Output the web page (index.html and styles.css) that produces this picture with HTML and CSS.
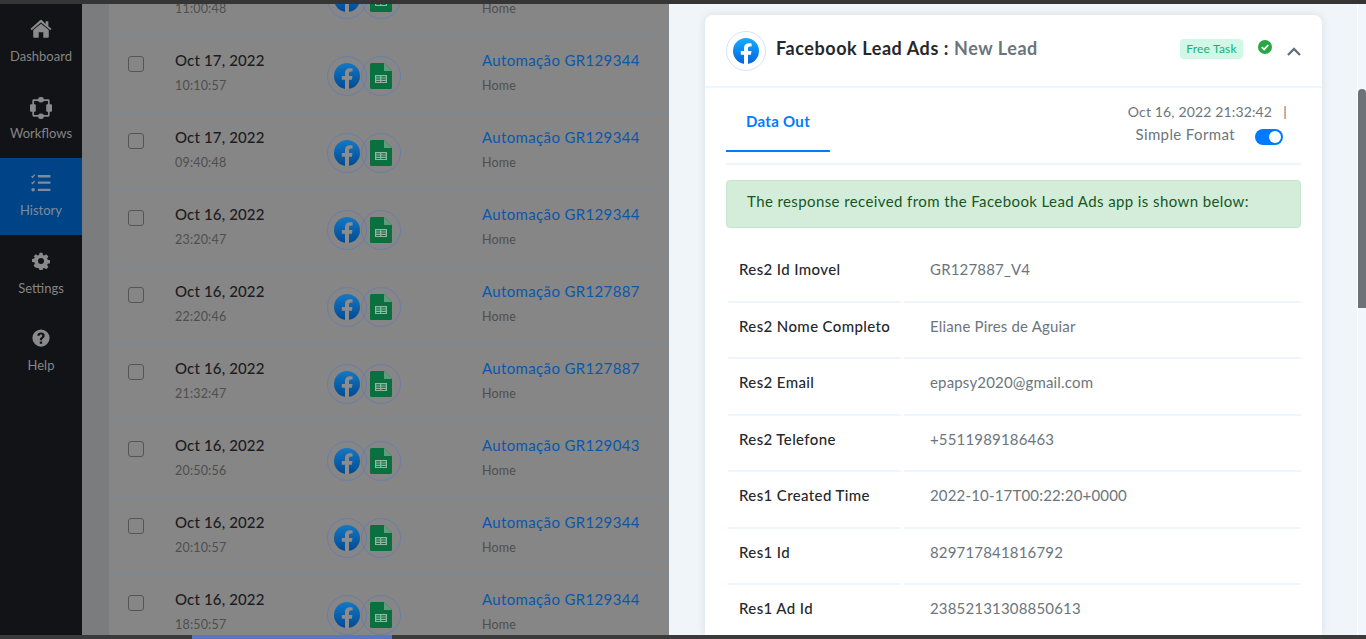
FILE: index.html
```html
<!DOCTYPE html>
<html lang="en">
<head>
  <meta charset="UTF-8" />
  <title>Task History</title>
  <link rel="stylesheet" href="styles.css">
</head>
<body>
  <svg class="defs" width="0" height="0">
    <defs>
      <linearGradient id="fbDim" x1="0" y1="0" x2="0" y2="1"><stop offset="0" stop-color="#1478c4"/><stop offset="1" stop-color="#004a94"/></linearGradient>
      <linearGradient id="fbLit" x1="0" y1="0" x2="0" y2="1"><stop offset="0" stop-color="#18acfe"/><stop offset="1" stop-color="#0163e0"/></linearGradient>
      <symbol id="fb-dim" viewBox="0 0 26 26">
        <circle cx="13" cy="13" r="13" fill="url(#fbDim)"/>
        <path d="M11 26v-9.2H7.8V13H11v-2.9c0-3.2 1.9-4.9 4.8-4.9 1.4 0 2.8.2 2.8.2v3.1H17c-1.5 0-2 1-2 1.9V13h3.5l-.6 3.8H15V26z" fill="#8c8c8c"/>
      </symbol>
      <symbol id="fb-lit" viewBox="0 0 26 26">
        <circle cx="13" cy="13" r="13" fill="url(#fbLit)"/>
        <path d="M11 26v-9.2H7.8V13H11v-2.9c0-3.2 1.9-4.9 4.8-4.9 1.4 0 2.8.2 2.8.2v3.1H17c-1.5 0-2 1-2 1.9V13h3.5l-.6 3.8H15V26z" fill="#fff"/>
      </symbol>
      <symbol id="sheets" viewBox="0 0 22 26">
        <path d="M1.5 0H14l8 8v16.500a1.500 1.500 0 0 1-1.500 1.500h-19A1.500 1.500 0 0 1 0 24.500v-23A1.500 1.500 0 0 1 1.500 0z" fill="#0b7040"/>
        <path d="M14 0l8 8h-8z" fill="#5f9c7e"/>
        <path d="M5 12h12v8H5zm1.200 1.200v1.200h3.900v-1.200zm5.100 0v1.200h4.500v-1.200zm-5.100 2.400v1.200h3.900v-1.200zm5.100 0v1.200h4.500v-1.200zm-5.100 2.400v.9h3.900V18zm5.100 0v.9h4.500V18z" fill="#8fb7a2" fill-rule="evenodd"/>
      </symbol>
    </defs>
  </svg>

  <div class="topbar"></div>
  <div class="app">
    <nav class="sidebar">
      <a class="nav-item">
        <svg class="nav-icon" viewBox="0 0 24 22"><path d="M12 4.600 3.500 11.500V19a1 1 0 0 0 1 1h5v-6h5v6h5a1 1 0 0 0 1-1v-7.500z"/><path d="M23.400 10.200 20 7.400V2h-3v3L12.800.700a1.300 1.300 0 0 0-1.600 0L.6 10.200l1.200 1.500L12 3.300l10.200 8.400z"/></svg>
        <span>Dashboard</span>
      </a>
      <a class="nav-item">
        <svg class="nav-icon flow" viewBox="0 0 22 22"><rect x="3.200" y="3.200" width="15.600" height="15.600" rx=".6" fill="none" stroke="#8a8a8a" stroke-width="1.700"/><rect x="8.200" y="0" width="5.600" height="5.500" rx="2.200"/><rect x="8.200" y="16.500" width="5.600" height="5.500" rx="2.200"/><rect x="0" y="7.200" width="5.800" height="7.600" rx="1"/><rect x="16.200" y="7.200" width="5.800" height="7.600" rx="1"/></svg>
        <span>Workflows</span>
      </a>
      <a class="nav-item active">
        <svg class="nav-icon" viewBox="0 0 20 20"><path d="M1 3l1 1 2-2.500M1 9l1 1 2-2.500" fill="none" stroke="#7f8b99" stroke-width="1.300"/><circle cx="2.500" cy="16" r="1.700"/><path d="M7 2h12v2.200H7zM7 8h12v2.200H7zM7 15h12v2.200H7z"/></svg>
        <span>History</span>
      </a>
      <a class="nav-item">
        <svg class="nav-icon small" viewBox="0 0 24 24"><path fill-rule="evenodd" d="M10 1h4l.6 3 1.800.8 2.600-1.700 2.900 2.900-1.700 2.600.8 1.800 3 .6v4l-3 .6-.8 1.800 1.700 2.600-2.900 2.900-2.600-1.700-1.800.8-.6 3h-4l-.6-3-1.800-.8L5 21.100l-2.900-2.900 1.700-2.600-.8-1.800-3-.6v-4l3-.6.8-1.800L2.100 6 5 3.100l2.600 1.700L9.400 4zM12 8a4 4 0 1 0 0 8 4 4 0 0 0 0-8z"/></svg>
        <span>Settings</span>
      </a>
      <a class="nav-item">
        <svg class="nav-icon small" viewBox="0 0 24 24"><path fill-rule="evenodd" d="M12 .5a11.500 11.500 0 1 1 0 23 11.500 11.500 0 0 1 0-23zM10.400 16.500v3.200h3.200v-3.200zM12 4.800c-2.900 0-4.700 1.500-5 4l2.900.5c.2-1.200.9-1.900 2-1.900 1.100 0 1.900.6 1.900 1.600 0 .8-.5 1.300-1.400 1.900-1.400.9-2 1.800-2 3.200v.8h3v-.5c0-.8.3-1.100 1.300-1.800 1.300-.9 2.200-2 2.200-3.800 0-2.500-2-4-4.900-4z"/></svg>
        <span>Help</span>
      </a>
    </nav>

    <div class="gutter"></div>

    <section class="history">
      <div class="row partial">
        <span class="check"></span>
        <div class="when"><b>Oct 17, 2022</b><small>11:00:48</small></div>
        <div class="apps"><span class="app-ring"><svg class="fb"><use href="#fb-dim"/></svg></span><span class="app-ring second"><svg class="gs"><use href="#sheets"/></svg></span></div>
        <div class="name"><a>Automação GR129344</a><small>Home</small></div>
      </div>
      <div class="row">
        <span class="check"></span>
        <div class="when"><b>Oct 17, 2022</b><small>10:10:57</small></div>
        <div class="apps"><span class="app-ring"><svg class="fb"><use href="#fb-dim"/></svg></span><span class="app-ring second"><svg class="gs"><use href="#sheets"/></svg></span></div>
        <div class="name"><a>Automação GR129344</a><small>Home</small></div>
      </div>
      <div class="row">
        <span class="check"></span>
        <div class="when"><b>Oct 17, 2022</b><small>09:40:48</small></div>
        <div class="apps"><span class="app-ring"><svg class="fb"><use href="#fb-dim"/></svg></span><span class="app-ring second"><svg class="gs"><use href="#sheets"/></svg></span></div>
        <div class="name"><a>Automação GR129344</a><small>Home</small></div>
      </div>
      <div class="row">
        <span class="check"></span>
        <div class="when"><b>Oct 16, 2022</b><small>23:20:47</small></div>
        <div class="apps"><span class="app-ring"><svg class="fb"><use href="#fb-dim"/></svg></span><span class="app-ring second"><svg class="gs"><use href="#sheets"/></svg></span></div>
        <div class="name"><a>Automação GR129344</a><small>Home</small></div>
      </div>
      <div class="row">
        <span class="check"></span>
        <div class="when"><b>Oct 16, 2022</b><small>22:20:46</small></div>
        <div class="apps"><span class="app-ring"><svg class="fb"><use href="#fb-dim"/></svg></span><span class="app-ring second"><svg class="gs"><use href="#sheets"/></svg></span></div>
        <div class="name"><a>Automação GR127887</a><small>Home</small></div>
      </div>
      <div class="row">
        <span class="check"></span>
        <div class="when"><b>Oct 16, 2022</b><small>21:32:47</small></div>
        <div class="apps"><span class="app-ring"><svg class="fb"><use href="#fb-dim"/></svg></span><span class="app-ring second"><svg class="gs"><use href="#sheets"/></svg></span></div>
        <div class="name"><a>Automação GR127887</a><small>Home</small></div>
      </div>
      <div class="row">
        <span class="check"></span>
        <div class="when"><b>Oct 16, 2022</b><small>20:50:56</small></div>
        <div class="apps"><span class="app-ring"><svg class="fb"><use href="#fb-dim"/></svg></span><span class="app-ring second"><svg class="gs"><use href="#sheets"/></svg></span></div>
        <div class="name"><a>Automação GR129043</a><small>Home</small></div>
      </div>
      <div class="row">
        <span class="check"></span>
        <div class="when"><b>Oct 16, 2022</b><small>20:10:57</small></div>
        <div class="apps"><span class="app-ring"><svg class="fb"><use href="#fb-dim"/></svg></span><span class="app-ring second"><svg class="gs"><use href="#sheets"/></svg></span></div>
        <div class="name"><a>Automação GR129344</a><small>Home</small></div>
      </div>
      <div class="row">
        <span class="check"></span>
        <div class="when"><b>Oct 16, 2022</b><small>18:50:57</small></div>
        <div class="apps"><span class="app-ring"><svg class="fb"><use href="#fb-dim"/></svg></span><span class="app-ring second"><svg class="gs"><use href="#sheets"/></svg></span></div>
        <div class="name"><a>Automação GR129344</a><small>Home</small></div>
      </div>
    </section>

    <aside class="drawer">
      <div class="card">
        <header class="card-head">
          <span class="app-ring lit"><svg class="fb"><use href="#fb-lit"/></svg></span>
          <h2>Facebook Lead Ads : <em>New Lead</em></h2>
          <span class="badge">Free Task</span>
          <svg class="ok" viewBox="0 0 14 14"><circle cx="7" cy="7" r="7" fill="#28a745"/><path d="M3.800 7.200l2.300 2.200 4.200-4.400" fill="none" stroke="#fff" stroke-width="1.800"/></svg>
          <svg class="chevron" viewBox="0 0 14 9"><path d="M1 8l6-6 6 6" fill="none" stroke="#67707c" stroke-width="2.400"/></svg>
        </header>
        <div class="card-body">
          <div class="tabs">
            <a class="tab">Data Out</a>
            <div class="tab-meta">
              <div class="stamp">Oct 16, 2022 21:32:42 &nbsp;&nbsp;|</div>
              <div class="format">Simple Format <span class="switch"></span></div>
            </div>
          </div>
          <div class="alert">The response received from the Facebook Lead Ads app is shown below:</div>
          <div class="data">
            <div class="data-row"><span class="key">Res2 Id Imovel</span><span class="val">GR127887_V4</span></div>
            <div class="data-row"><span class="key">Res2 Nome Completo</span><span class="val">Eliane Pires de Aguiar</span></div>
            <div class="data-row"><span class="key">Res2 Email</span><span class="val">epapsy2020@gmail.com</span></div>
            <div class="data-row"><span class="key">Res2 Telefone</span><span class="val">+5511989186463</span></div>
            <div class="data-row"><span class="key">Res1 Created Time</span><span class="val">2022-10-17T00:22:20+0000</span></div>
            <div class="data-row"><span class="key">Res1 Id</span><span class="val">829717841816792</span></div>
            <div class="data-row"><span class="key">Res1 Ad Id</span><span class="val">23852131308850613</span></div>
          </div>
        </div>
      </div>
      <div class="scrollbar"><div class="thumb"></div></div>
    </aside>
  </div>
  <div class="bottombar"><div class="tab-strip"></div></div>
</body>
</html>
```

FILE: styles.css
```css
html, body {
  margin: 0;
  height: 100%;
  overflow: hidden;
}
body {
  display: flex;
  flex-direction: column;
  font-family: 'Lato', 'Open Sans', sans-serif;
  background: #333;
}
.defs {
  position: absolute;
}
.topbar {
  height: 4px;
  background: #353535;
  flex: none;
}
.bottombar {
  height: 4px;
  background: #3a3a3a;
  flex: none;
}
.tab-strip {
  width: 200px;
  height: 4px;
  margin-left: 192px;
  background: #5b74c4;
}
.app {
  flex: 1;
  display: flex;
  min-height: 0;
}

/* sidebar */
.sidebar {
  width: 82px;
  flex: none;
  background: #111316;
  color: #858585;
  font-size: 13px;
}
.nav-item {
  height: 77px;
  display: flex;
  flex-direction: column;
  align-items: center;
  padding-top: 15px;
  box-sizing: border-box;
}
.nav-item span {
  margin-top: 7.500px;
}
.nav-item.active {
  background: #004488;
  color: #7f8b99;
}
.nav-icon {
  width: 22px;
  height: 21px;
  fill: #8a8a8a;
}
.nav-icon.flow {
  height: 22px;
  margin: 1px 0 -2px;
}
.nav-icon.small {
  width: 18px;
  height: 18px;
  margin: 2px 0 2px;
}
.active .nav-icon {
  fill: #7f8b99;
}

/* list behind the drawer */
.gutter {
  width: 27px;
  flex: none;
  background: #7b7c7d;
}
.history {
  width: 560px;
  flex: none;
  background: #868686;
  overflow: hidden;
}
.row {
  height: 77px;
  box-sizing: border-box;
  border-bottom: 2px solid #80878f;
  display: flex;
  align-items: flex-start;
  position: relative;
}
.row.partial {
  margin-top: -44px;
}
.check {
  width: 14px;
  height: 14px;
  margin: 19px 0 0 19px;
  border: 1px solid #555;
  border-radius: 3px;
  flex: none;
}
.when {
  margin: 13px 0 0 31px;
  width: 152px;
  flex: none;
}
.when b {
  display: block;
  font-weight: 500;
  font-size: 15px;
  line-height: 20px;
  color: #1c1c1e;
  letter-spacing: .15px;
}
small {
  display: block;
  font-size: 12.500px;
  line-height: 18px;
  margin-top: 7px;
  color: #4e4e4e;
  letter-spacing: .2px;
}
.apps {
  display: flex;
  margin-top: 19px;
  width: 155px;
  flex: none;
}
.app-ring {
  width: 38px;
  height: 38px;
  border: 1px solid #6c7ca8;
  border-radius: 50%;
  display: flex;
  align-items: center;
  justify-content: center;
  flex: none;
}
.app-ring.second {
  margin-left: -6px;
}
.fb {
  width: 26px;
  height: 26px;
}
.gs {
  width: 22px;
  height: 26px;
}
.name {
  margin-top: 13px;
}
.name a {
  display: block;
  font-size: 15px;
  line-height: 20px;
  color: #0a57ab;
  letter-spacing: .35px;
}

/* drawer */
.drawer {
  flex: 1;
  background: #f0f5fa;
  display: flex;
  min-width: 0;
}
.card {
  width: 617px;
  margin: 11px 0 0 36px;
  background: #fff;
  border-radius: 8px 8px 0 0;
  box-shadow: 0 0 8px rgba(0, 0, 0, .1);
  flex: none;
}
.card-head {
  height: 73px;
  box-sizing: border-box;
  border-bottom: 2px solid #eef5fd;
  padding: 0 21px;
  display: flex;
  align-items: center;
}
.app-ring.lit {
  border-color: #d5e3f8;
}
.card-head h2 {
  margin: -6px 0 0 10px;
  font-size: 18px;
  font-weight: 700;
  color: #25272b;
  letter-spacing: .57px;
  flex: 1;
}
.card-head em {
  font-style: normal;
  color: #6c757d;
}
.badge {
  height: 20px;
  line-height: 20px;
  width: 63px;
  text-align: center;
  margin-top: -3px;
  border-radius: 4px;
  background: #d1f7e6;
  color: #16b077;
  font-size: 12px;
  letter-spacing: .2px;
}
.ok {
  width: 14px;
  height: 14px;
  margin: -7px 0 0 15px;
}
.chevron {
  width: 14px;
  height: 9px;
  margin: 2px 0 0 15px;
}
.card-body {
  padding: 0 21px;
}
.tabs {
  height: 77px;
  box-sizing: border-box;
  border-bottom: 2px solid #eef5fd;
  display: flex;
  justify-content: space-between;
}
.tab {
  width: 104px;
  height: 64px;
  box-sizing: border-box;
  border-bottom: 2px solid #007bff;
  text-align: center;
  line-height: 67px;
  color: #007bff;
  font-weight: 700;
  font-size: 15px;
  letter-spacing: .3px;
}
.tab-meta {
  margin: 14px 14px 0 0;
  text-align: right;
  color: #6c757d;
  font-size: 14px;
  letter-spacing: .15px;
}
.stamp {
  line-height: 20px;
}
.format {
  display: flex;
  align-items: center;
  justify-content: flex-end;
  line-height: 20px;
  margin-top: 0;
  font-size: 15px;
  letter-spacing: .38px;
}
.switch {
  width: 28px;
  height: 16px;
  margin: 7px 4px 0 20px;
  border-radius: 8px;
  background: #007bff;
  position: relative;
}
.switch::after {
  content: "";
  position: absolute;
  right: 2px;
  top: 2px;
  width: 12px;
  height: 12px;
  border-radius: 50%;
  background: #fff;
}
.alert {
  margin-top: 15px;
  height: 48px;
  box-sizing: border-box;
  padding-left: 20px;
  line-height: 40px;
  background: #d4edda;
  border: 1px solid #c3e6cb;
  border-radius: 4px;
  color: #155724;
  font-size: 15px;
  letter-spacing: .4px;
}
.data {
  margin: 18px 0 0 2px;
}
.data-row {
  height: 56.500px;
  display: flex;
  gap: 3px;
  font-size: 15px;
  line-height: 46px;
}
.key, .val {
  box-sizing: border-box;
  border-bottom: 2px solid #eef5fd;
}
.key {
  width: 173px;
  padding-left: 11px;
  color: #25272b;
  font-weight: 500;
  letter-spacing: .38px;
}
.val {
  flex: 1;
  padding-left: 26px;
  color: #6c757d;
  letter-spacing: .17px;
}
.scrollbar {
  width: 8px;
  margin-left: auto;
  background: #f1f6fc;
  border-left: 1px solid #fff;
  flex: none;
}
.thumb {
  height: 219px;
  margin-top: 85px;
  background: #6c7278;
  border-radius: 4px 4px 0 0;
}
```
